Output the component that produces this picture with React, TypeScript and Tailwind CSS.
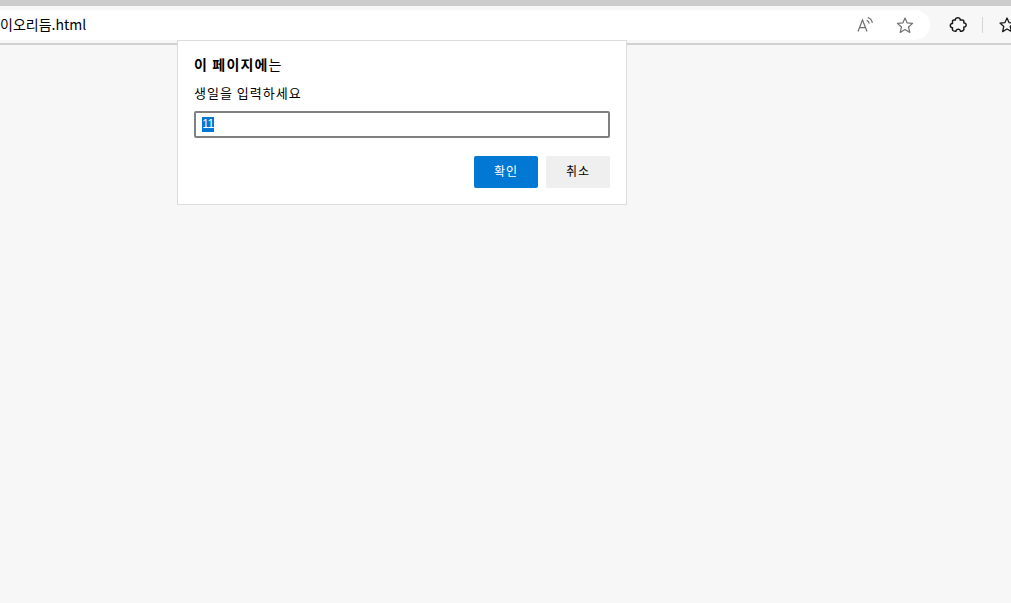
const font = { fontFamily: '"Noto Sans CJK KR", "Liberation Sans", sans-serif' };

function ReadAloud() {
  return (
    <svg width="18" height="18" viewBox="0 0 18 18" fill="none" stroke="#707070" strokeWidth="1.2">
      <path d="M2 15.5 L6.5 4 L11 15.5 M3.6 11.6 H9.4" />
      <path d="M10.6 4.4 C12 4.9 12.9 6 13.3 7.6 M11.8 1.6 C14.2 2.2 15.8 4.2 16.4 6.8" />
    </svg>
  );
}

function Star() {
  return (
    <svg width="18" height="18" viewBox="0 0 18 18" fill="none" stroke="#707070" strokeWidth="1.2" strokeLinejoin="round">
      <path d="M9 2 L11.2 6.9 L16.6 7.4 L12.5 11 L13.8 16.4 L9 13.6 L4.2 16.4 L5.5 11 L1.4 7.4 L6.8 6.9 Z" />
    </svg>
  );
}

function Puzzle() {
  return (
    <svg width="18" height="18" viewBox="0 0 18 18" fill="none" stroke="#1a1a1a" strokeWidth="1.5" strokeLinejoin="round" strokeLinecap="round">
      <path d="M6.4 4 C6 0.9 11.6 0.9 11.2 4 C12 4.3 13.7 3.7 14.5 4.4 C15.2 5.1 14.7 6.5 14.9 7 C17.9 6.8 17.9 11.2 14.9 11 C14.7 11.8 15.3 13.3 14.5 14.3 C13.7 15.2 12.2 15.3 11.3 15.2 C11.6 12.6 6.8 12.6 7.1 15.2 C6.2 15.3 4.6 15.4 3.8 14.4 C3 13.5 3.6 12.4 3.5 11.7 C0.6 12 0.6 7.1 3.5 7.4 C3.6 6.6 3.1 5.2 3.9 4.4 C4.6 3.7 5.7 4.3 6.4 4 Z" />
    </svg>
  );
}

function Favorites() {
  return (
    <svg width="18" height="18" viewBox="0 0 18 18" fill="none" stroke="#1a1a1a" strokeWidth="1.3" strokeLinejoin="round">
      <path d="M8 2 L10 6.6 L15 7.1 L11.2 10.4 L12.4 15.6 L8 13 L3.6 15.6 L4.8 10.4 L1 7.1 L6 6.6 Z" />
      <path d="M12.5 9.5 H18 M12.5 12.5 H18" />
    </svg>
  );
}

export default function App() {
  return (
    <div className="relative h-[603px] w-[1011px] overflow-hidden bg-[#f7f7f7] text-black" style={font}>
      <div className="h-[6px] bg-[#cccccc]" />
      <div className="flex h-[39px] items-start overflow-hidden border-b-2 border-[#d0d0d0] bg-[#f7f7f7] pt-[4px]">
        <div className="flex h-[30px] w-[930px] shrink-0 items-center justify-between rounded-r-[15px] bg-white pr-[16px]">
          <span className="-mt-[2px] text-[14px] leading-[30px]">이오리듬.html</span>
          <div className="flex items-center gap-[22px]">
            <ReadAloud />
            <Star />
          </div>
        </div>
        <div className="ml-[19px] flex h-[30px] items-center">
          <Puzzle />
          <div className="ml-[15px] h-[16px] w-px bg-[#d4d4d4]" />
          <div className="ml-[16px]">
            <Favorites />
          </div>
        </div>
      </div>

      <div className="absolute left-[177px] top-[40px] flex h-[165px] w-[450px] flex-col border border-[#dcdcdc] bg-white px-[16px]">
        <div className="mt-[13px] text-[14px] font-bold leading-[20px] tracking-[1.15px]">
          이 페이지에<span className="font-normal">는</span>
        </div>
        <div className="mt-[9px] text-[13px] leading-[20px] tracking-[1px]">생일을 입력하세요</div>
        <div className="mt-[8px] flex h-[27px] items-center rounded-[2px] border-2 border-[#808080] bg-white pl-[6px]">
          <span className="flex h-[15px] w-[12px] items-center justify-center bg-[#0078d4] [font-family:'Liberation_Sans',sans-serif] text-[12px] leading-[15px] tracking-[-0.5px] text-white">11</span>
        </div>
        <div className="mt-[18px] flex justify-end gap-[8px]">
          <button className="h-[32px] w-[64px] rounded-[2px] bg-[#0078d4] pb-[2px] text-[12px] tracking-[1px] text-white">확인</button>
          <button className="h-[32px] w-[64px] rounded-[2px] bg-[#efefef] pb-[2px] text-[12px] tracking-[1px] text-black">취소</button>
        </div>
      </div>
    </div>
  );
}
